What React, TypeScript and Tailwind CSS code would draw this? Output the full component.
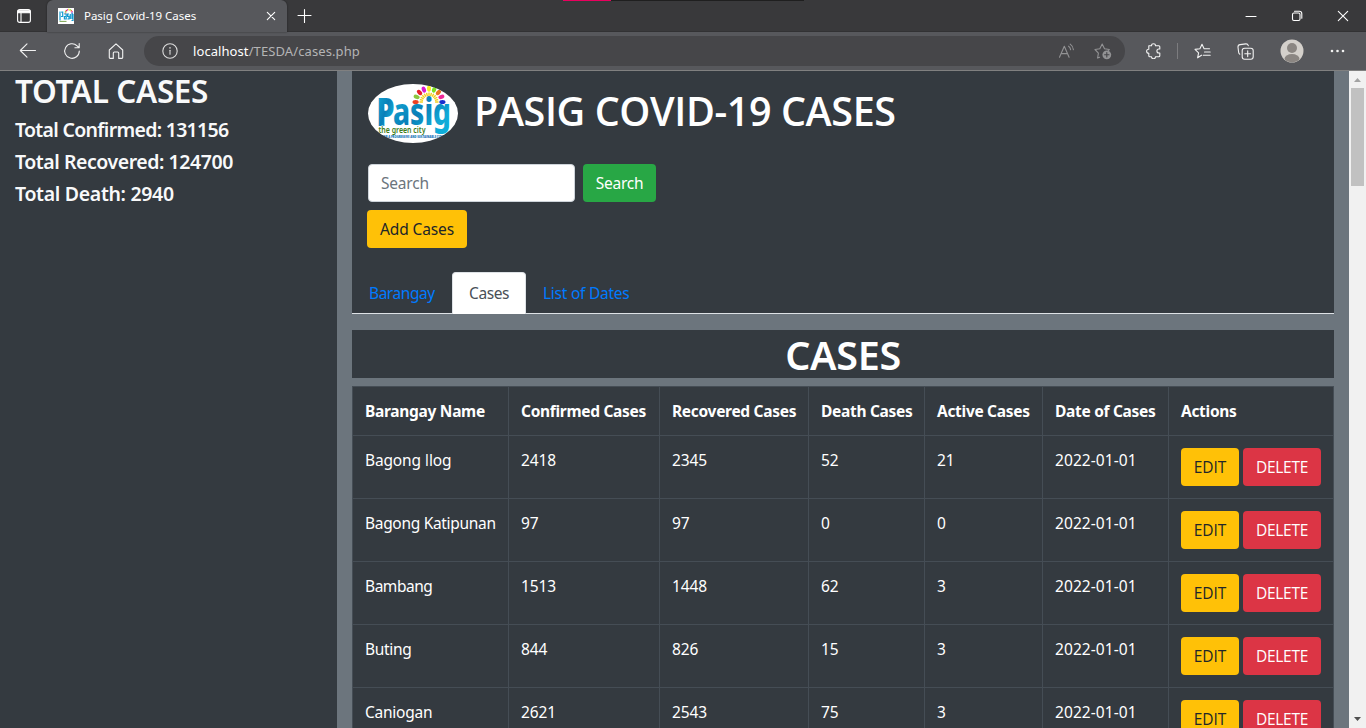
import type { ReactNode } from "react";

const sans = "font-['Noto_Sans','Liberation_Sans',sans-serif]";
const open = "font-['Open_Sans','Liberation_Sans',sans-serif]";

const rows = [
  { name: <>Bagong <span className={open}>I</span>log</>, key: "ilog", track: "tracking-[-0.15px]", v: ["2418", "2345", "52", "21"] },
  { name: "Bagong Katipunan", key: "katipunan", track: "tracking-[-0.31px]", v: ["97", "97", "0", "0"] },
  { name: "Bambang", key: "bambang", track: "tracking-[-0.45px]", v: ["1513", "1448", "62", "3"] },
  { name: "Buting", key: "buting", track: "tracking-[-0.3px]", v: ["844", "826", "15", "3"] },
  { name: "Caniogan", key: "caniogan", track: "tracking-[-0.25px]", v: ["2621", "2543", "75", "3"] },
];

const headers = [
  ["Barangay Name", "w-[156px]"],
  ["Confirmed Cases", "w-[151px]"],
  ["Recovered Cases", "w-[149px]"],
  ["Death Cases", "w-[116px]"],
  ["Active Cases", "w-[118px]"],
  ["Date of Cases", "w-[126px]"],
  ["Actions", "w-[165px]"],
];

const petals = ["#ef4123", "#8cc63f", "#e8202a", "#d81bd0", "#f5ee20", "#7be020", "#e8761f", "#f0289a", "#1a2fd0"];

function PasigLogo({ className }: { className: string }) {
  return (
    <svg className={className} viewBox="0 0 90 59">
      <defs>
        <clipPath id="oval"><ellipse cx="45" cy="29.5" rx="45" ry="29.5" /></clipPath>
        <linearGradient id="blue" x1="0" y1="0" x2="1" y2="1">
          <stop offset="0" stopColor="#12b4dc" />
          <stop offset="0.5" stopColor="#0a7fb8" />
          <stop offset="0.75" stopColor="#12a9d6" />
          <stop offset="1" stopColor="#0bb0dc" />
        </linearGradient>
      </defs>
      <g clipPath="url(#oval)">
        <rect width="90" height="59" fill="#fff" />
        {petals.map((c, i) => (
          <ellipse key={i} cx="61" cy="4.6" rx="2" ry="3.1" fill={c} transform={`rotate(${-90 + i * 22.5} 61 18)`} />
        ))}
        {Array.from({ length: 13 }, (_, i) => (
          <path key={i} d="M61 8.500v3.4" stroke="#f2cf1d" strokeWidth="1.4" transform={`rotate(${-90 + i * 15} 61 18)`} />
        ))}
        <text x="8.500" y="41.5" fontFamily="Open Sans" fontWeight="800" fontSize="38" textLength="18" lengthAdjust="spacingAndGlyphs" fill="url(#blue)">P</text>
        <text x="25" y="41" fontFamily="Noto Sans" fontWeight="800" fontSize="37" textLength="58" lengthAdjust="spacingAndGlyphs" fill="url(#blue)">asig</text>
        <text x="10.5" y="49" fontFamily="Noto Sans" fontWeight="600" fontSize="8" textLength="47" lengthAdjust="spacingAndGlyphs" fill="#3f7d1c" stroke="#fff" strokeWidth="1" paintOrder="stroke">the green city</text>
        <text x="14" y="54.300" fontFamily="Open Sans" fontWeight="800" fontSize="3.4" textLength="61" lengthAdjust="spacingAndGlyphs" fill="#1273b8">FOR A PROGRESSIVE AND SUSTAINABLE CITY</text>
      </g>
    </svg>
  );
}

function Icon({ children, className = "", box = "0 0 16 16" }: { children: ReactNode; className?: string; box?: string }) {
  return (
    <svg viewBox={box} fill="none" stroke="currentColor" strokeWidth="1.1" strokeLinecap="round" strokeLinejoin="round" className={`shrink-0 ${className}`}>
      {children}
    </svg>
  );
}

function TabStrip() {
  return (
    <div className="relative flex h-8 shrink-0 items-stretch border-b border-[#323234] bg-[#39393b] text-white">
      <div className="absolute top-0 left-[563px] flex h-px w-[241px] bg-[#1f1f1f]">
        <span className="w-12 bg-[#ea005e]" />
      </div>
      <div className="flex w-[47px] items-center pl-4">
        <Icon className="size-4"><rect x="1.6" y="1.6" width="12.8" height="12.8" rx="2.2" /><path d="M2 2.8h12v2H2z" fill="currentColor" /><path d="M5 5v9" /></Icon>
      </div>
      <div className="-mb-px flex w-60 items-center rounded-t-md bg-[#57585c] pl-[11px] shadow-[0_0_2px_rgba(0,0,0,0.5)]">
        <svg className="size-4" viewBox="0 0 16 16">
          <rect width="16" height="16" fill="#fff" />
          {petals.map((c, i) => (
            <ellipse key={i} cx="10.8" cy="1.6" rx="0.6" ry="1" fill={c} transform={`rotate(${-90 + i * 22.5} 10.8 5)`} />
          ))}
          <path d="M2 3.500v9M3.200 4.200h1.500v4.300H3M6.200 6h2v5H6.400V8.500h1.500M11 6H9.600v2.400H11V11H9.400M12.300 6v5M15 6h-1v4.500h1V6v6.500h-1.500" fill="none" stroke="#1499cf" strokeWidth="1.2" />
          <path d="M1.500 13.400h7" stroke="#6d9a3c" strokeWidth="0.9" />
        </svg>
        <span className={`ml-2.5 text-[11.5px] tracking-[-0.04px] ${sans}`}>Pasig Covid-19 Cases</span>
        <Icon className="ml-auto mr-[11px] size-[10px]" box="0 0 10 10"><path d="M1.3 1.3l7.4 7.4M8.7 1.3L1.3 8.7" /></Icon>
      </div>
      <Icon className="ml-[10px] mt-2 size-4"><path d="M7.500 1.500v13M1 7.500h13" /></Icon>
      <div className="ml-auto flex items-center">
        <Icon className="mr-[34px] size-3" box="0 0 12 12"><path d="M1 6.5h10" /></Icon>
        <Icon className="mr-[34px] size-3" box="0 0 12 12"><rect x="1.500" y="3" width="7.500" height="7.500" rx="1.4" /><path d="M3.500 1.2h4.8a2.5 2.5 0 0 1 2.5 2.5v4.500" /></Icon>
        <Icon className="mr-[17px] size-3" box="0 0 12 12"><path d="M1.3 1.3l9.4 9.4M10.7 1.3l-9.4 9.4" /></Icon>
      </div>
    </div>
  );
}

function Toolbar() {
  return (
    <div className="flex h-[39px] shrink-0 items-center border-b border-[#808080] bg-[#57585c] text-[#f2f2f2]">
      <Icon className="ml-[19px] size-[18px]" box="0 0 18 18"><path d="M16.500 8.500H1.500M8 1.800L1.300 8.500 8 15.200" /></Icon>
      <Icon className="ml-[26px] size-[18px]" box="0 0 18 18"><path d="M16.3 9a7.3 7.3 0 1 1-2.2-5.2L16 5.6M16.2 1.5v4.3h-4.3" /></Icon>
      <Icon className="ml-[26px] size-[18px]" box="0 0 18 18"><path d="M2.3 8L9 1.8 15.7 8v7.6a.8.8 0 0 1-.8.8h-3.2V11a1 1 0 0 0-1-1H7.3a1 1 0 0 0-1 1v5.4H3.1a.8.8 0 0 1-.8-.8z" /></Icon>
      <div className="ml-[19px] flex h-[30px] w-[981px] items-center rounded-full bg-[#464649] pl-[18px]">
        <Icon className="size-4 text-[#dcdcdc]"><circle cx="8" cy="8" r="7.2" /><path d="M8 7.3v4" /><path d="M8 4.8v.1" strokeWidth="1.5" /></Icon>
        <span className={`ml-[15px] text-[13px] tracking-[0.08px] text-white ${sans}`}>localhost</span>
        <span className={`text-[13px] tracking-[0.1px] text-[#b4b4b5] ${sans}`}>/TESDA/cases.php</span>
        <Icon className="ml-auto mr-[19px] size-4 text-[#929294]"><path d="M.500 14.300L5.300 3.200l4.800 11.100M2.100 10.600H8.500M9.600 3.200a4.6 4.6 0 0 1 2 3.400M11.200 1.100a7.5 7.5 0 0 1 3.200 5.600" /></Icon>
        <Icon className="mr-[13px] size-[18px] text-[#929294]" box="0 0 18 18">
          <path d="M5.600 15.200l-2 .9.8-5L1 7.500l4.800-.8L8.200 2l2.3 4.7 4.800.8-1 1" />
          <circle cx="12.8" cy="12.8" r="4.4" fill="currentColor" stroke="none" /><path d="M12.8 10.600V15M10.600 12.800H15" stroke="#464649" />
        </Icon>
      </div>
      <Icon className="ml-5 size-4"><path d="M3.800 2.700h2.700a2 1.900 0 0 1 4 0h3.300c.6 0 1 .4 1 1v2.300h-.9a2 2 0 0 0 0 4h.9v2.800c0 .6-.4 1-1 1h-3.300a2 1.900 0 0 1-4 0H4.800c-.6 0-1-.4-1-1V10.200a2.200 2 0 0 1 0-4z" /></Icon>
      <span className="ml-4 h-4 w-px bg-[#7c7c7f]" />
      <Icon className="ml-4 size-[17px]" box="0 0 17 17"><path d="M7.500 12.200l-3.900 2.600 1-5L1 6.400l4.900-.6L8 1.300l2.100 4.500h5.400M10.500 9h5.700M9.200 12.200h7" /></Icon>
      <Icon className="ml-[26px] size-[17px]" box="0 0 17 17"><rect x="5.2" y="5.2" width="11" height="11" rx="2.4" /><path d="M10.700 7.800v5.800M7.800 10.700h5.800M2.800 11.200A2.5 2.5 0 0 1 1.600 9L1 4.200a2.400 2.400 0 0 1 2.100-2.600L8.800.9a2.400 2.400 0 0 1 2.500 1.700" /></Icon>
      <svg className="ml-[26px] size-6" viewBox="0 0 24 24">
        <defs><clipPath id="avatar"><circle cx="12" cy="12" r="11.3" /></clipPath></defs>
        <circle cx="12" cy="12" r="11.5" fill="#d4d0cb" />
        <circle cx="12" cy="9" r="5" fill="#8b8682" />
        <ellipse cx="12" cy="20" rx="7.500" ry="5" fill="#8b8682" clipPath="url(#avatar)" />
      </svg>
      <svg className="ml-[25px] h-4 w-4" viewBox="0 0 16 16" fill="#f2f2f2"><circle cx="3" cy="8" r="1.3" /><circle cx="8.500" cy="8" r="1.3" /><circle cx="14" cy="8" r="1.3" /></svg>
    </div>
  );
}

export default function App() {
  return (
    <div className={`flex h-[728px] w-[1366px] flex-col overflow-hidden bg-[#6c757d] text-[15.5px] leading-6 text-white ${sans}`}>
      <TabStrip />
      <Toolbar />
      <div className="flex min-h-0 flex-1">
        <aside className="w-[337px] bg-[#343a40] pl-[15px] font-semibold text-[#f8f9fa]">
          <h2 className="mb-2 pt-px text-[31.5px] leading-[38px] tracking-[-0.35px]">TOTAL CASES</h2>
          <h5 className="mb-2 text-[19.5px] tracking-[-0.7px]">Total Confirmed: 131156</h5>
          <h5 className="mb-2 text-[19.5px] tracking-[-0.45px]">Total Recovered: 124700</h5>
          <h5 className="text-[19.5px] tracking-[-0.32px]">Total Death: 2940</h5>
        </aside>
        <main className="ml-[15px] w-[982px]">
          <header className="h-[243px] border-b border-[#dee2e6] bg-[#343a40]">
            <div className="flex h-[93px] items-start pl-4 pt-[13px]">
              <PasigLogo className="h-[59px] w-[90px]" />
              <h1 className={`ml-4 mt-[3px] text-[39.5px] leading-[48px] font-semibold tracking-[-0.4px] ${open}`}>PASIG COVID-19 CASES</h1>
            </div>
            <form className="flex gap-2 pl-4">
              <input placeholder="Search" className="h-[38px] w-[207px] rounded border border-[#ced4da] bg-white px-3 tracking-[-0.22px] placeholder:text-[#6c757d]" />
              <button type="button" className="h-[38px] w-[73px] rounded bg-[#28a745] tracking-[-0.25px]">Search</button>
            </form>
            <button className="mt-2 ml-[15px] block h-[38px] w-[100px] rounded bg-[#ffc107] tracking-[-0.12px] text-[#212529]">Add Cases</button>
            <nav className="mt-6 flex h-[42px] text-[#007bff]">
              <a className="w-[100px] pt-[9px] pl-[17px] tracking-[-0.45px]">Barangay</a>
              <a className="w-[74px] rounded-t border border-b-0 border-[#dee2e6] bg-white pt-2 pl-4 tracking-[-0.42px] text-[#495057]">Cases</a>
              <a className="pt-[9px] pl-[17px] tracking-[-0.25px]">List of Dates</a>
            </nav>
          </header>
          <h1 className="mt-4 mb-2 h-12 bg-[#343a40] text-center text-[39.5px] leading-[51px] font-semibold tracking-[-0.3px]">CASES</h1>
          <table className="w-[982px] table-fixed border-separate border-spacing-0 border-t border-l border-[#454d55] bg-[#343a40]">
            <thead>
              <tr className="h-[49px]">
                {headers.map(([label, width]) => (
                  <th key={label} className={`border-r border-b border-[#454d55] px-3 text-left font-bold tracking-[-0.3px] whitespace-nowrap ${width}`}>{label}</th>
                ))}
              </tr>
            </thead>
            <tbody>
              {rows.map((r) => (
                <tr key={r.key} className="h-[63px] align-top">
                  <td className={`border-r border-b border-[#454d55] px-3 pt-3 whitespace-nowrap ${r.track}`}>{r.name}</td>
                  {r.v.map((n, i) => (
                    <td key={i} className="border-r border-b border-[#454d55] px-3 pt-3 tracking-[-0.15px]">{n}</td>
                  ))}
                  <td className="border-r border-b border-[#454d55] px-3 pt-3 tracking-[0.08px]">2022-01-01</td>
                  <td className={`border-r border-b border-[#454d55] px-3 pt-3 ${open}`}>
                    <div className="flex gap-1">
                      <button className="h-[38px] w-[58px] rounded bg-[#ffc107] tracking-[-0.1px] text-[#212529]">EDIT</button>
                      <button className="h-[38px] w-[78px] rounded bg-[#dc3545] tracking-[-0.25px]">DELETE</button>
                    </div>
                  </td>
                </tr>
              ))}
            </tbody>
          </table>
        </main>
        <div className="ml-auto flex w-[17px] flex-col items-center bg-[#f1f1f1]">
          <svg className="h-[17px] w-[17px] shrink-0" viewBox="0 0 17 17"><path d="M5 11l3.500-4 3.500 4z" fill="#a3a3a3" /></svg>
          <div className="h-[98px] w-[13px] shrink-0 bg-[#c1c1c1]" />
          <svg className="mt-auto h-[17px] w-[17px] shrink-0" viewBox="0 0 17 17"><path d="M5 6l3.500 4 3.500-4z" fill="#505050" /></svg>
        </div>
      </div>
    </div>
  );
}
